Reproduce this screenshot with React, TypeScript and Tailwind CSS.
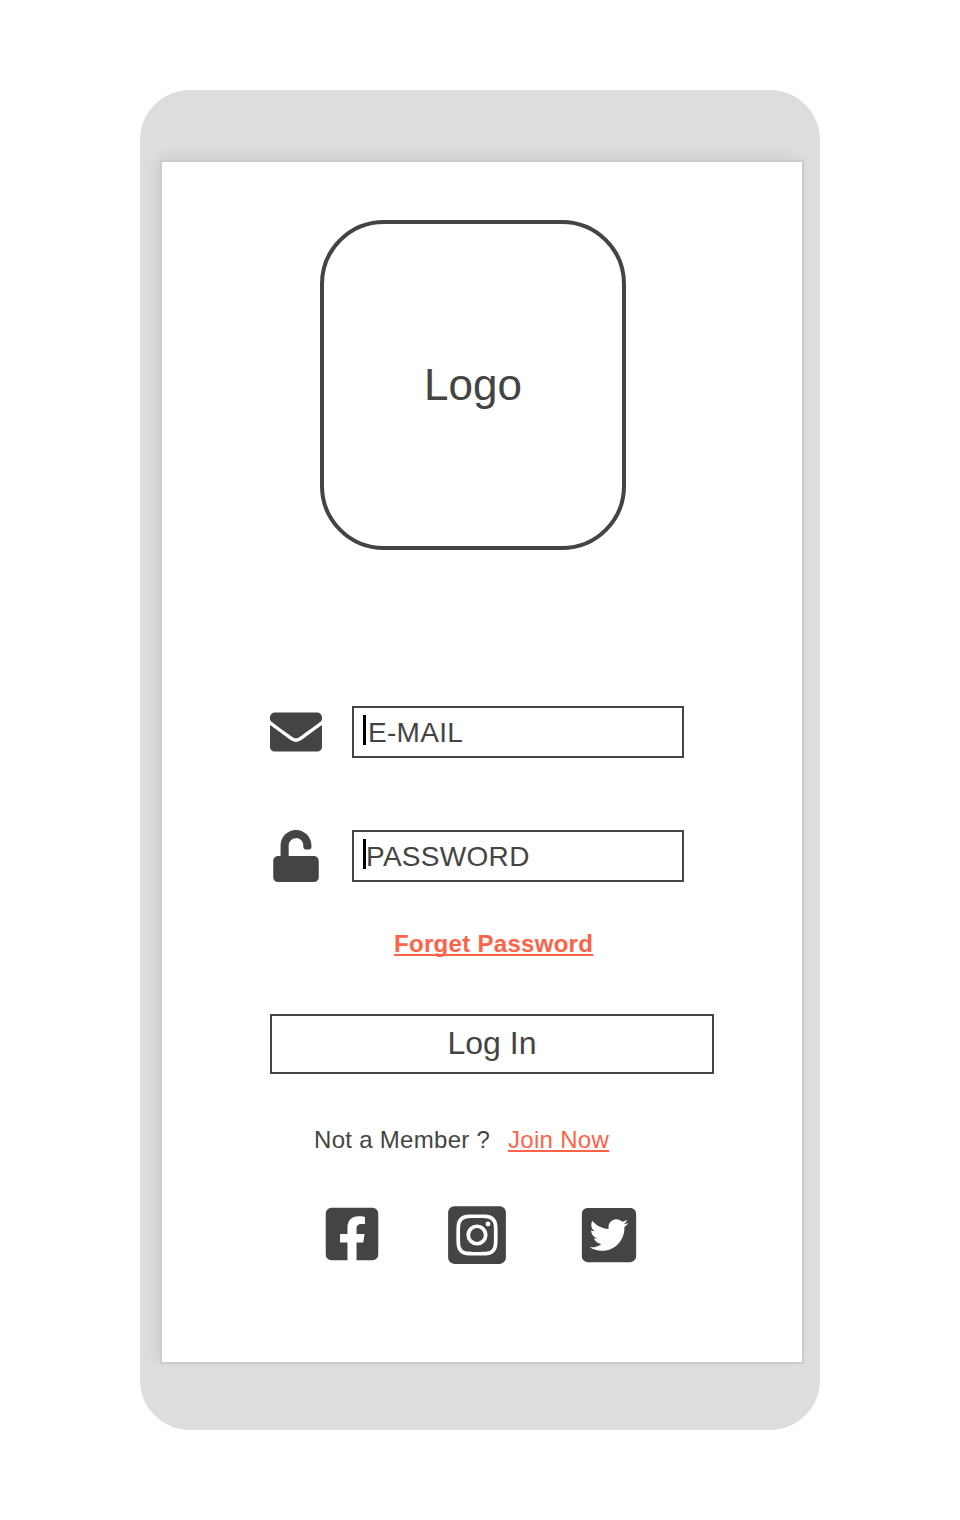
import {
  FaEnvelope,
  FaUnlock,
  FaFacebookSquare,
  FaInstagramSquare,
  FaTwitterSquare,
} from "react-icons/fa";
import type { ReactNode } from "react";

function Field({ icon, children }: { icon: ReactNode; children: ReactNode }) {
  return (
    <div className="flex h-[52px] items-center">
      <div className="flex w-[52px] shrink-0 justify-center">{icon}</div>
      <div className="ml-[30px] flex h-[52px] w-[332px] border-2 border-[#444] pl-[9px] pt-[7px]">
        <span className="h-[30px] w-[2.7px] shrink-0 bg-black" />
        {children}
      </div>
    </div>
  );
}

export default function App() {
  return (
    <div className="flex h-[1520px] w-[960px] justify-center bg-white pt-[90px] font-['Liberation_Sans',Arial,sans-serif] text-[#444]">
      <div className="h-[1340px] w-[680px] rounded-[50px] bg-[#ddd] pl-[20px] pt-[70px]">
        <main className="flex h-[1204px] w-[644px] flex-col border-2 border-[#ccc] bg-white pl-[108px] shadow-[-4px_-3px_12px_-2px_rgba(0,0,0,0.09)]">
          <div className="ml-[50px] mt-[58px] flex h-[330px] w-[306px] items-center justify-center rounded-[64px] border-4 border-[#444] text-[44px] leading-[50px]">
            Logo
          </div>

          <div className="mt-[156px] flex flex-col gap-[72px]">
            <Field icon={<FaEnvelope size={52} />}>
              <span className="pl-[2.3px] text-[28px] leading-[36px] tracking-[0.3px]">E-MAIL</span>
            </Field>
            <Field icon={<FaUnlock size={52} />}>
              <span className="pl-[0.3px] text-[28px] leading-[36px] tracking-[0.3px]">PASSWORD</span>
            </Field>
          </div>

          <a className="ml-[124px] mt-[48px] w-fit text-[24px] font-bold leading-[28px] tracking-[0.3px] text-[#ff6347] underline [text-decoration-skip-ink:none]">
            Forget Password
          </a>

          <button className="mt-[56px] h-[60px] w-[444px] border-2 border-[#444] pb-[2px] text-[32px] leading-[54px]">
            Log In
          </button>

          <p className="ml-[44px] mt-[52px] flex text-[24px] leading-[28px] tracking-[0.3px]">
            <span className="w-[194px]">Not a Member ?</span>
            <a className="text-[#ff6347] underline [text-decoration-skip-ink:none]">Join Now</a>
          </p>

          <div className="ml-[52px] mt-[48px] flex h-[66px] items-center">
            <FaFacebookSquare size={60} className="mb-[2px]" />
            <FaInstagramSquare size={66} className="ml-[62px]" />
            <FaTwitterSquare size={62} className="ml-[68px]" />
          </div>
        </main>
      </div>
    </div>
  );
}
